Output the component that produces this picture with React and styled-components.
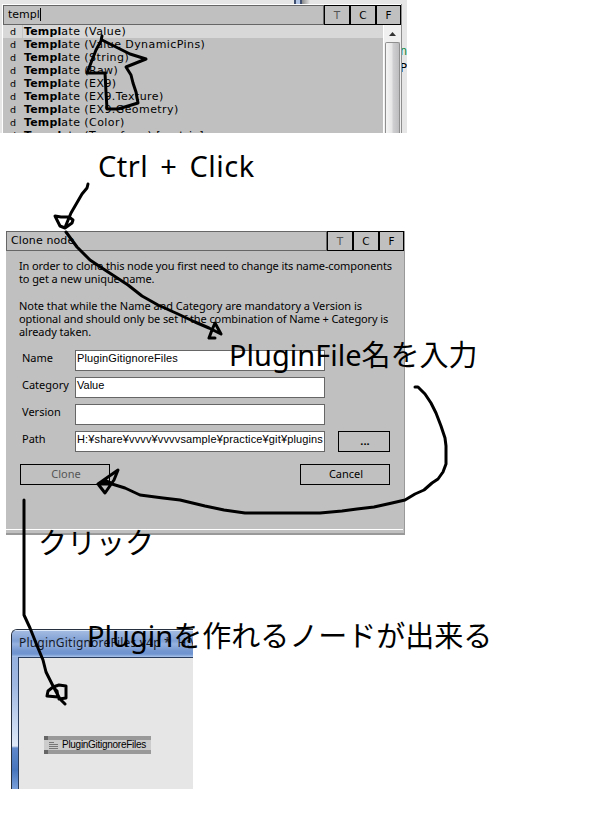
import React from "react";
import styled, { createGlobalStyle } from "styled-components";

const Global = createGlobalStyle`
  *{box-sizing:border-box}
  html,body{margin:0;background:#fff;overflow:hidden}
  body{font-family:"DejaVu Sans",sans-serif;font-size:11px;color:#000}
`;
const Canvas = styled.main`
  position:relative;width:603px;height:821px;overflow:hidden;
  display:flex;flex-direction:column;align-items:flex-start;
`;

/* shared title bar */
const Bar = styled.div`display:flex;height:20px;`;
const BarField = styled.div`
  width:321px;flex:none;height:20px;border:1px solid #666;background:#c0c0c0;
  padding:0 0 0 4px;font:11px/17px "DejaVu Sans",sans-serif;letter-spacing:${p => p.$ls || 0}px;white-space:nowrap;
`;
const Caret = styled.span`display:inline-block;width:1px;height:13px;background:#000;vertical-align:-3px;`;
const BarButton = styled.button`
  width:26px;flex:none;height:20px;padding:0;border:1px solid #000;background:#c0c0c0;
  font:10.5px/18px "DejaVu Sans",sans-serif;color:${p => (p.$dim ? "#555" : "#000")};
  &:last-child{width:25px}
`;

/* node browser */
const Backdrop = styled.section`
  width:407px;height:133px;background:#e6e6e6;padding:4px 0 0 2px;display:flex;overflow:hidden;position:relative;
`;
const Browser = styled.div`
  width:399px;height:129px;border-top:1px solid #fff;border-left:1px solid #fff;background:#c0c0c0;flex:none;
`;
const BrowserEdge = styled.div`width:1px;background:#8e8e8e;flex:none;`;
const BehindCode = styled.div`
  width:5px;overflow:hidden;padding-top:39px;font:12px/17px "DejaVu Sans Mono",monospace;
  span{display:block;margin-left:-2px}
  span:first-child{color:#168a3a}
`;
const BehindWindow = styled.div`
  position:absolute;left:294px;top:0;width:16px;height:4px;
  background:linear-gradient(90deg,#405070 0 2px,#b4c6e6 2px 6px,#405070 6px 8px,#8b8b8b 8px,#e6e6e6 100%);
`;
const BrowserBody = styled.div`display:flex;height:108px;`;
const List = styled.ul`margin:0;padding:0;width:380px;list-style:none;overflow:hidden;`;
const Row = styled.li`
  display:flex;height:13px;line-height:14px;white-space:pre;
  background:${p => (p.$on ? "#d8d8d8" : "#c0c0c0")};
`;
const Kind = styled.span`width:20px;padding-left:7px;font-size:9.5px;border-right:1px solid ${p => (p.$on ? "#c4c4c4" : "#c0c0c0")};`;
const Label = styled.span`padding-left:1px;letter-spacing:.42px;b{letter-spacing:.15px}`;
const Scroll = styled.div`width:18px;background:#f0f0f0;border-left:1px solid #fff;display:flex;flex-direction:column;`;
const ScrollUp = styled.div`height:17px;display:flex;justify-content:center;align-items:center;`;
const Thumb = styled.div`
  flex:1;margin:0 1px;border:1px solid #8f8f8f;border-bottom:0;border-radius:2px 2px 0 0;
  background:linear-gradient(90deg,#f5f5f5,#e6e6e6 45%,#cfcfd2 55%,#bdbdc0);
`;

/* clone dialog */
const Dialog = styled.section`
  margin:98px 0 0 6px;width:399px;height:304px;background:#c0c0c0;border-right:1px solid #999;
  border-bottom:2px solid #999;display:flex;flex-direction:column;font-family:"Noto Sans",sans-serif;
`;
const Info = styled.p`
  margin:8px 0 0 13px;font-size:11px;line-height:13px;white-space:nowrap;height:81px;
  span{display:block}
  span:nth-child(3){margin-top:14px}
`;
const Line = styled.span`letter-spacing:${p => p.$ls}px;`;
const Form = styled.div`display:grid;grid-template-columns:53px 250px 13px 52px;row-gap:6px;margin:10px 0 0 16px;`;
const FieldLabel = styled.label`font-size:11px;line-height:15px;`;
const Field = styled.div`
  height:21px;background:#fff;border:1px solid #666;padding-left:1px;overflow:hidden;white-space:nowrap;
  font:11px/15px "Liberation Sans","Noto Sans CJK JP",sans-serif;letter-spacing:${p => p.$ls || 0}px;
`;
const Button = styled.button`
  width:${p => p.$w}px;height:21px;padding:0 0 1px 2px;border:1px solid #000;background:#c0c0c0;
  font:11px/18px "Noto Sans",sans-serif;color:${p => (p.$dim ? "#555" : "#000")};
  ${p => p.$more && "grid-column:4;font-weight:700;"}
`;
const Actions = styled.div`display:flex;justify-content:space-between;margin:12px 14px 0 14px;`;
const DialogFoot = styled.div`margin-top:auto;height:4px;border-top:1px solid #fff;margin-right:1px;`;

/* patch window */
const Patch = styled.section`
  margin:94px 0 0 11px;width:182px;height:160px;border:1px solid #26303f;border-width:1px 0 0 1px;
  border-radius:6px 0 0 0;overflow:hidden;display:grid;grid-template:27px 1fr / 6px 1fr;
  background:linear-gradient(#8eaadb,#9fb8e2 55px,#d9e5f6 110px,#dfe9f7 116px,#5f88ca 118px,#4775bd 140px,#7aa0da);
`;
const PatchTitle = styled.div`
  grid-column:1/3;padding-left:7px;line-height:24px;font-size:12px;letter-spacing:.2px;white-space:pre;color:#151a28;
  font-family:"Noto Sans",sans-serif;border-top:1px solid #dce8f7;
  background:linear-gradient(#a3bbe2 0,#7f9fd3 10px,#96b2df 13px,#7396d0 20px,#6e93cf 23px,#a9c3ea);
`;
const PatchBody = styled.div`grid-column:2;background:#e6e6e6;border:1px solid #273b5c;border-width:1px 0 0 1px;padding:78px 0 0 25px;`;
const Node = styled.div`
  width:107px;height:18px;border:solid #999;border-width:4px 0;background:
  linear-gradient(#ccc,#ccc);display:flex;align-items:center;position:relative;padding-left:5px;gap:4px;white-space:nowrap;
  font:10px/10px "Liberation Sans",sans-serif;letter-spacing:-.28px;
  svg{flex:none}
  &::before,&::after{content:"";position:absolute;left:0;width:4px;height:4px;background:#666}
  &::before{top:-4px}&::after{bottom:-4px}
`;

/* handwritten notes */
const Note = styled.div`
  position:absolute;left:${p => p.$x}px;top:${p => p.$y}px;font:29px/40px "Noto Sans","Noto Sans CJK JP",sans-serif;
  letter-spacing:${p => p.$ls || 0}px;word-spacing:${p => p.$ws || 0}px;white-space:nowrap;
`;
const Kana = styled.span`font-family:"Noto Sans CJK JP",sans-serif;font-size:29px;letter-spacing:0;`;
const Ink = styled.svg`position:absolute;left:0;top:0;pointer-events:none;`;

const rows = ["(Value)", "(Value DynamicPins)", "(String)", "(Raw)", "(EX9)", "(EX9.Texture)", "(EX9.Geometry)", "(Color)", "(Transform) [matrix]"];

function WindowButtons() {
  return <><BarButton $dim>T</BarButton><BarButton>C</BarButton><BarButton>F</BarButton></>;
}

export default function App() {
  return (
    <Canvas>
      <Global />
      <Backdrop>
        <BehindWindow />
        <Browser>
          <Bar><BarField>templ<Caret /></BarField><WindowButtons /></Bar>
          <BrowserBody>
            <List>
              {rows.map((r, i) => (
                <Row key={r} $on={i === 0}><Kind $on={i === 0}>d</Kind><Label><b>Templ</b>ate {r}</Label></Row>
              ))}
            </List>
            <Scroll>
              <ScrollUp><svg width="7" height="4"><path d="M0 4L3.5 0L7 4Z" fill="#333" /></svg></ScrollUp>
              <Thumb />
            </Scroll>
          </BrowserBody>
        </Browser>
        <BrowserEdge />
        <BehindCode><span>n</span><span>P</span></BehindCode>
      </Backdrop>

      <Dialog>
        <Bar><BarField $ls={0.12}>Clone node</BarField><WindowButtons /></Bar>
        <Info>
          <Line $ls={-0.11}>In order to clone this node you first need to change its name-components</Line>
          <Line $ls={-0.11}>to get a new unique name.</Line>
          <Line $ls={-0.05}>Note that while the Name and Category are mandatory a Version is</Line>
          <Line $ls={-0.1}>optional and should only be set if the combination of Name + Category is</Line>
          <Line $ls={-0.05}>already taken.</Line>
        </Info>
        <Form>
          <FieldLabel>Name</FieldLabel><Field $ls={0.12}>PluginGitignoreFiles</Field><i /><i />
          <FieldLabel>Category</FieldLabel><Field>Value</Field><i /><i />
          <FieldLabel>Version</FieldLabel><Field /><i /><i />
          <FieldLabel>Path</FieldLabel><Field $ls={0.14}>H:¥share¥vvvv¥vvvvsample¥practice¥git¥plugins</Field>
          <Button $w={52} $more>...</Button>
        </Form>
        <Actions><Button $w={90} $dim>Clone</Button><Button $w={90}>Cancel</Button></Actions>
        <DialogFoot />
      </Dialog>

      <Patch>
        <PatchTitle>PluginGitignoreFiles.v4p *  H:\</PatchTitle>
        <PatchBody>
          <Node>
            <svg width="9" height="7" shapeRendering="crispEdges"><path d="M0 .5h5M0 2.5h9M0 4.5h9M0 6.5h9" stroke="#777" /></svg>
            PluginGitignoreFiles
          </Node>
        </PatchBody>
      </Patch>

      <Note $x={98} $y={146} $ls={0.5} $ws={4}>Ctrl + Click</Note>
      <Note $x={229} $y={333}>PluginFile<Kana>名を入力</Kana></Note>
      <Note $x={38} $y={521}><Kana>クリック</Kana></Note>
      <Note $x={87} $y={614}>Plugin<Kana>を作れるノードが出来る</Kana></Note>

      <Ink width="603" height="821" fill="none" stroke="#000" strokeWidth="3" strokeLinecap="round" strokeLinejoin="round">
        <path d="M102 36L101 41L96 50L87 73L105 73L106 92L107 109L118 109L128 106L138 103L136 92L133 83L131 75L126 67L146 59L130 54L102 40" />
        <path d="M88 184L87 188L82 194L71 213L66 225L65 228L60 226L55 216L61 217L69 217L73 220L72 223L65 228" />
        <path d="M66 232L77 247L90 260L105 270L128 285L142 296L158 305L178 314L195 322L209 328L221 334L215 323L212 330L209 338L215 338" />
        <path d="M415 387L418 387L425 394L431 403L436 413L441 426L445 438L446 446L446 464L443 472L438 479L432 483L424 490L415 494L405 500L392 503L374 507L357 509L342 511L320 513L245 513L224 510L205 506L180 500L163 498L140 495L125 488L112 484L98 484L118 470L114 480L105 493L98 484L106 481L111 483" />
        <path d="M24 500L24 615L30 628L38 648L43 660L46 672L53 686L60 699L65 704M53 687L48 691L47 696L58 697L57 691L53 687L59 685L66 686L66 698L59 699" />
      </Ink>
    </Canvas>
  );
}
